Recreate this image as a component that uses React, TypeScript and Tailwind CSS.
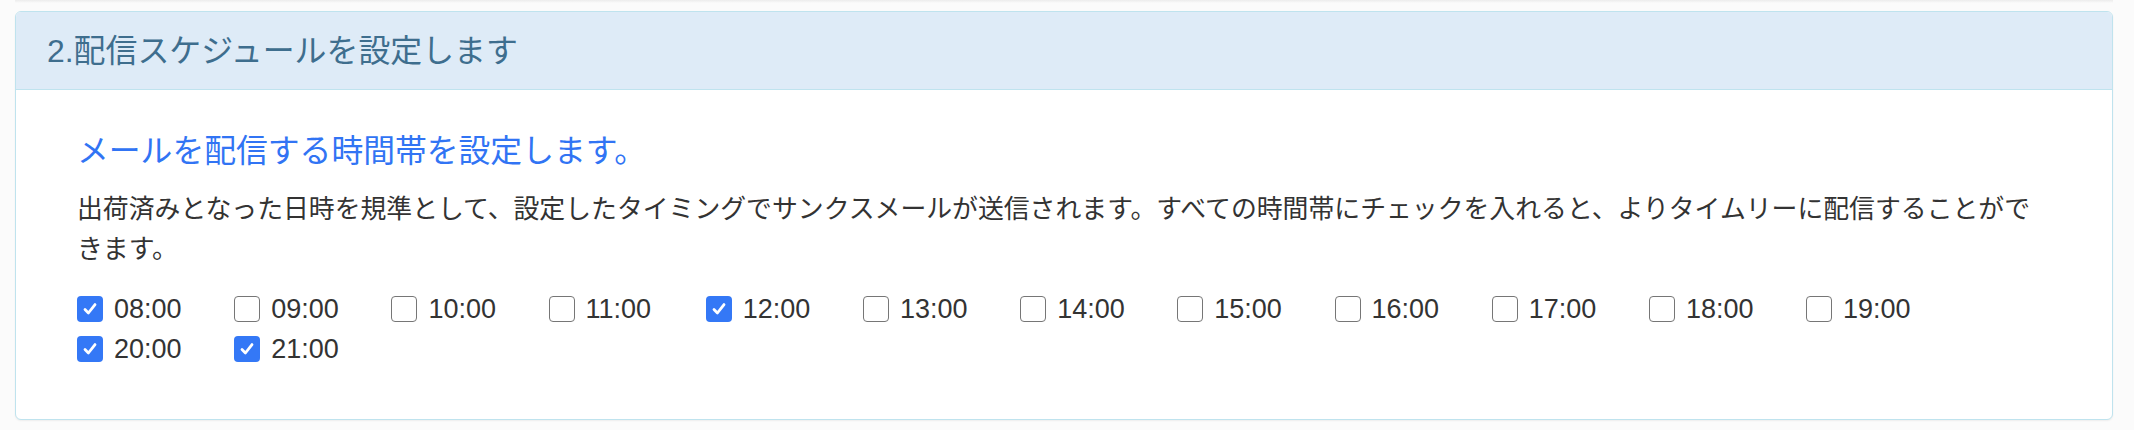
import React from "react";

const hours = [
  { label: "08:00", checked: true },
  { label: "09:00", checked: false },
  { label: "10:00", checked: false },
  { label: "11:00", checked: false },
  { label: "12:00", checked: true },
  { label: "13:00", checked: false },
  { label: "14:00", checked: false },
  { label: "15:00", checked: false },
  { label: "16:00", checked: false },
  { label: "17:00", checked: false },
  { label: "18:00", checked: false },
  { label: "19:00", checked: false },
  { label: "20:00", checked: true },
  { label: "21:00", checked: true },
];

const CheckBox = ({ checked }: { checked: boolean }) =>
  checked ? (
    <span className="flex h-[26px] w-[26px] shrink-0 items-center justify-center rounded-[4px] bg-[#3478f6]">
      <svg width="16" height="16" viewBox="0 0 16 16">
        <path
          d="M3 8.6 L6.4 12 L13 3.6"
          fill="none"
          stroke="#fff"
          strokeWidth="2.8"
          strokeLinecap="round"
          strokeLinejoin="round"
        />
      </svg>
    </span>
  ) : (
    <span className="block h-[26px] w-[26px] shrink-0 rounded-[4px] border-[1.5px] border-[#767676] bg-white" />
  );

const App = () => {
  return (
    <div className="min-h-screen bg-[#fbfbfb] pl-[15px] pr-[21px] font-['Liberation_Sans','Noto_Sans_CJK_JP',sans-serif]">
      <div className="h-[3px] bg-gradient-to-b from-[#ececec] to-[#fbfbfb]" />
      <div className="mt-[8px] rounded-[6px] border border-[#bfe3ee] bg-white shadow-[0_1px_2px_rgba(0,0,0,0.06)]">
        <div className="flex h-[78px] items-center rounded-t-[5px] border-b border-[#bfe3ee] bg-[#deebf7] pl-[31px]">
          <h2 className="text-[31.9px] leading-[36px] text-[#3e6e8e]">2.配信スケジュールを設定します</h2>
        </div>

        <div className="pl-[61px] pr-[71px] pt-[41px] pb-[50px]">
          <h3 className="text-[31.8px] leading-[34px] text-[#3174f4] font-['Noto_Sans_CJK_JP',sans-serif]">
            メールを配信する時間帯を設定します。
          </h3>
          <p className="mt-[22px] text-[25.85px] leading-[40px] text-[#333] font-['Noto_Sans_CJK_JP',sans-serif]">
            出荷済みとなった日時を規準として、設定したタイミングでサンクスメールが送信されます。すべての時間帯にチェックを入れると、よりタイムリーに配信することができます。
          </p>

          <div className="mt-[22px] flex flex-wrap">
            {hours.map((h) => (
              <label key={h.label} className="flex h-[40px] w-[157.2px] items-center">
                <CheckBox checked={h.checked} />
                <span className="ml-[11px] text-[27px] leading-[30px] text-[#333]">{h.label}</span>
              </label>
            ))}
          </div>
        </div>
      </div>
    </div>
  );
};

export default App;
